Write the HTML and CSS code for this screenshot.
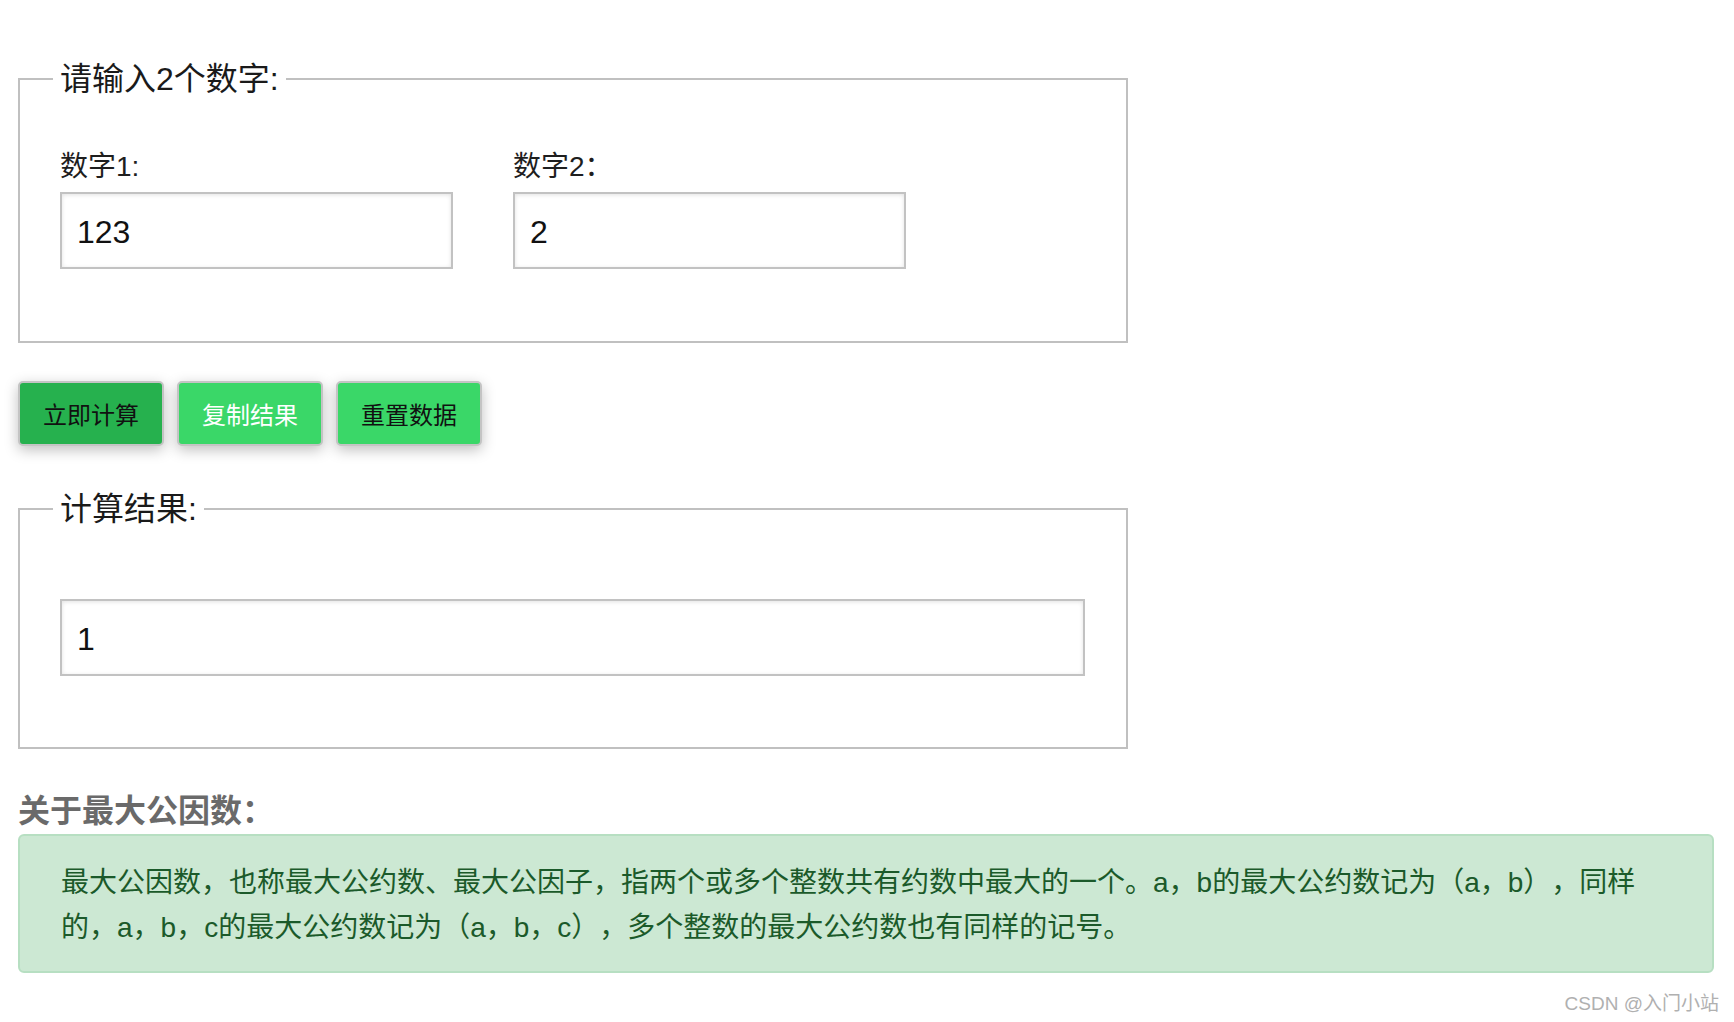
FILE: index.html
```html
<!DOCTYPE html>
<html lang="zh-CN">
<head>
<meta charset="utf-8">
<title>最大公因数计算</title>
<link rel="stylesheet" href="styles.css">
</head>
<body>
<div class="page">
  <fieldset class="box box-input">
    <legend>请输入2个数字:</legend>
    <div class="fields">
      <div class="field">
        <label class="field-label" for="n1">数字1:</label>
        <input class="field-input" id="n1" type="text" value="123">
      </div>
      <div class="field">
        <label class="field-label" for="n2">数字2：</label>
        <input class="field-input" id="n2" type="text" value="2">
      </div>
    </div>
  </fieldset>

  <div class="actions">
    <button class="btn btn-primary" type="button">立即计算</button>
    <button class="btn btn-secondary" type="button">复制结果</button>
    <button class="btn btn-secondary btn-dark-text" type="button">重置数据</button>
  </div>

  <fieldset class="box box-result">
    <legend>计算结果:</legend>
    <input class="field-input result-input" type="text" value="1">
  </fieldset>

  <h3 class="about-title">关于最大公因数：</h3>
  <div class="alert">最大公因数，也称最大公约数、最大公因子，指两个或多个整数共有约数中最大的一个。a，b的最大公约数记为（a，b），同样的，a，b，c的最大公约数记为（a，b，c），多个整数的最大公约数也有同样的记号。</div>

  <div class="watermark">CSDN @入门小站</div>
</div>
</body>
</html>
```

FILE: styles.css
```css
html, body {
  margin: 0;
  padding: 0;
  background: #ffffff;
}

body {
  font-family: "Liberation Sans", "Noto Sans CJK SC", sans-serif;
  color: #1a1a1a;
  text-spacing-trim: space-all;
}

.page {
  padding: 59px 20px 0 18px;
}

.box {
  margin: 0;
  width: 1110px;
  box-sizing: border-box;
  border: 2px solid #c0c0c0;
  padding: 0 41px 0 40px;
}

.box legend {
  font-size: 32px;
  line-height: 40px;
  padding: 0 7px;
  margin-left: -7px;
  color: #1a1a1a;
}

.fields {
  display: flex;
  gap: 60px;
  padding-top: 48px;
  padding-bottom: 72px;
}

.field {
  display: flex;
  flex-direction: column;
  width: 393px;
}

.field-label {
  display: block;
  font-size: 28px;
  line-height: 40px;
  margin-bottom: 5px;
  color: #1e1e1e;
}

.field-input {
  display: block;
  width: 100%;
  height: 77px;
  box-sizing: border-box;
  border: 2px solid #c2c2c2;
  border-radius: 0;
  box-shadow: inset 0 1px 4px rgba(0, 0, 0, 0.12);
  padding: 3px 15px 0;
  font-family: "Liberation Sans", "Noto Sans CJK SC", sans-serif;
  font-size: 32px;
  color: #111111;
  background: #ffffff;
  outline: none;
}

.actions {
  display: flex;
  gap: 13px;
  margin-top: 38px;
}

.btn {
  width: 146px;
  height: 65px;
  box-sizing: border-box;
  border: 2px solid #c4c4c4;
  border-radius: 5px;
  box-shadow: 0 4px 14px rgba(0, 0, 0, 0.25);
  font-family: "Liberation Sans", "Noto Sans CJK SC", sans-serif;
  font-size: 24px;
  padding: 0;
  cursor: pointer;
}

.btn-primary {
  background: #26b14e;
  color: #111111;
}

.btn-secondary {
  background: #3ad768;
  color: #ffffff;
}

.btn-dark-text {
  color: #111111;
}

.box-result {
  margin-top: 43px;
  padding-top: 70px;
  padding-bottom: 71px;
}

.result-input {
  width: 100%;
}

.about-title {
  margin: 42px 0 3px;
  font-size: 32px;
  line-height: 40px;
  font-weight: 600;
  color: #6a6a6a;
}

.alert {
  box-sizing: border-box;
  border: 2px solid #b7dfc2;
  border-radius: 6px;
  background: #cce8d3;
  color: #1b5a2a;
  font-size: 28px;
  line-height: 45px;
  padding: 24px 41px 21px 41px;
}

.watermark {
  margin-top: 20px;
  margin-right: -5px;
  text-align: right;
  font-size: 19px;
  line-height: 22px;
  color: #b0b0b0;
}
```
